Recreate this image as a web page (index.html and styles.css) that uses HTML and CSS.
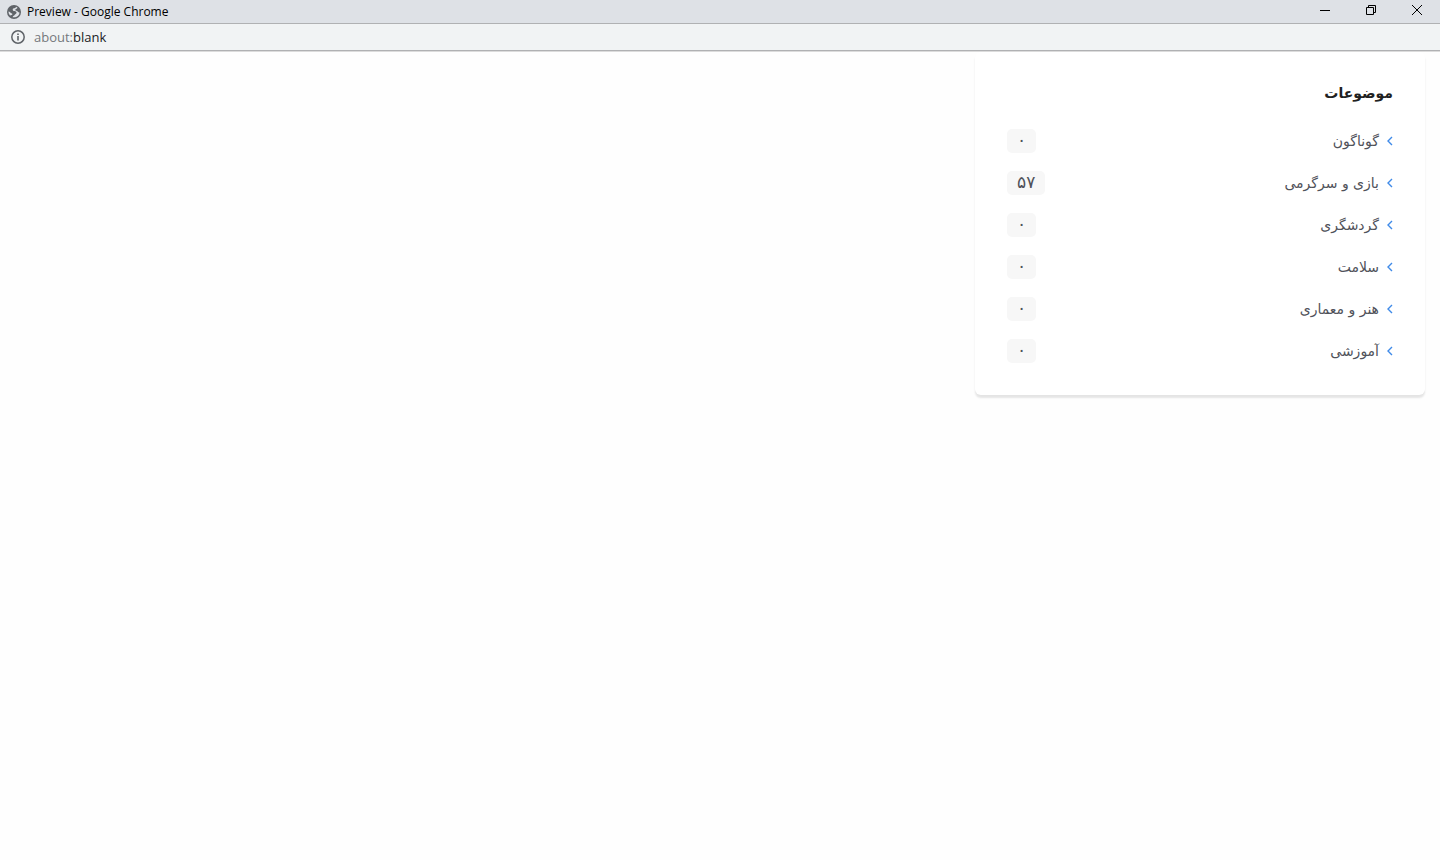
FILE: index.html
```html
<!DOCTYPE html>
<html lang="fa">
<head>
    <meta charset="UTF-8">
    <meta name="viewport" content="width=device-width, initial-scale=1.0">
    <title>Preview</title>
    <link rel="stylesheet" href="styles.css">
</head>
<body>
    <header class="titlebar" lang="en">
        <svg class="globe" viewBox="0 0 14 14" aria-hidden="true">
            <circle cx="7" cy="7" r="7" fill="#5f6368"/>
            <path d="M9 1.8C9 3.2 7.6 3.2 6.2 3.6C5.4 4.2 5.6 5.6 6.6 6C7.6 6.3 8.8 6.2 9.4 7C9.8 8.2 9 9 8 9.4C7.4 10.6 6 10.6 5.6 12.2C9.4 12.9 12.4 10.6 12.5 7.4C11.6 7.6 10.8 7 10.2 6C9 6 8 5.6 8.4 4.6C9 3.8 10.2 3.8 10.6 2.8ZM1.5 6.6C1.5 8.4 2 9.6 3 10.4C4 10.4 5.4 10 5.4 9C5 8 3.8 8.4 3.4 7.4C2.8 6.8 2.2 6.6 1.5 6.6Z" fill="#dee1e6"/>
        </svg>
        <span class="window-title">Preview - Google Chrome</span>
        <div class="window-buttons">
            <button type="button" aria-label="Minimize">
                <svg viewBox="0 0 12 12"><path d="M1 6.5h10"/></svg>
            </button>
            <button type="button" aria-label="Restore">
                <svg viewBox="0 0 12 12"><path d="M1.5 3.5h7v7h-7zM3.5 3.5v-2h7v7h-2"/></svg>
            </button>
            <button type="button" aria-label="Close">
                <svg viewBox="0 0 12 12"><path d="M1 1l10 10M11 1L1 11"/></svg>
            </button>
        </div>
    </header>
    <div class="addressbar" lang="en">
        <svg class="info" viewBox="0 0 14 14" aria-hidden="true">
            <circle cx="7" cy="7" r="6.2" fill="none" stroke="#5f6368" stroke-width="1.5"/>
            <path d="M6.2 6h1.6v4.5H6.2zM6.2 3.4h1.6V5H6.2z" fill="#5f6368"/>
        </svg>
        <span class="url">about:<b>blank</b></span>
    </div>

    <main dir="rtl">
        <section class="widget">
            <h3>موضوعات</h3>
            <ul class="categories">
                <li>
                    <a href="#"><svg viewBox="0 0 6 10"><path d="M5 1L1 5l4 4"/></svg>گوناگون</a>
                    <span class="count">۰</span>
                </li>
                <li>
                    <a href="#"><svg viewBox="0 0 6 10"><path d="M5 1L1 5l4 4"/></svg>بازی و سرگرمی</a>
                    <span class="count">۵۷</span>
                </li>
                <li>
                    <a href="#"><svg viewBox="0 0 6 10"><path d="M5 1L1 5l4 4"/></svg>گردشگری</a>
                    <span class="count">۰</span>
                </li>
                <li>
                    <a href="#"><svg viewBox="0 0 6 10"><path d="M5 1L1 5l4 4"/></svg>سلامت</a>
                    <span class="count">۰</span>
                </li>
                <li>
                    <a href="#"><svg viewBox="0 0 6 10"><path d="M5 1L1 5l4 4"/></svg>هنر و معماری</a>
                    <span class="count">۰</span>
                </li>
                <li>
                    <a href="#"><svg viewBox="0 0 6 10"><path d="M5 1L1 5l4 4"/></svg>آموزشی</a>
                    <span class="count">۰</span>
                </li>
            </ul>
        </section>
    </main>
</body>
</html>
```
FILE: styles.css
```css
* {
    box-sizing: border-box;
}

body {
    margin: 0;
    background-color: #fefefe;
    font-family: "DejaVu Sans", sans-serif;
}

/* window frame */
.titlebar {
    display: flex;
    align-items: center;
    height: 24px;
    padding-left: 7px;
    background-color: #dee1e6;
    border-bottom: 1px solid #b0b1b3;
}

.globe {
    width: 14px;
    height: 14px;
    margin-right: 6px;
}

.window-title {
    font-family: "Open Sans", sans-serif;
    font-size: 12px;
    line-height: 22px;
    color: #000000;
}

.window-buttons {
    display: flex;
    align-self: flex-start;
    margin-left: auto;
}

.window-buttons button {
    display: flex;
    align-items: center;
    justify-content: center;
    width: 46px;
    height: 20px;
    padding: 0;
    border: none;
    background: none;
}

.window-buttons svg {
    width: 12px;
    height: 12px;
    fill: none;
    stroke: #000000;
}

.addressbar {
    display: flex;
    align-items: center;
    height: 27px;
    padding-left: 11px;
    background-color: #f1f3f4;
    border-bottom: 1px solid #b0b1b3;
    box-shadow: 0 1px 0 #dcdcdc;
}

.info {
    width: 14px;
    height: 14px;
    margin-right: 9px;
}

.url {
    font-family: "Open Sans", sans-serif;
    font-size: 13px;
    line-height: 26px;
    color: #75787c;
}

.url b {
    font-weight: normal;
    color: #202124;
}

/* categories widget */
main {
    padding: 1px 15px 32px;
}

.widget {
    max-width: 450px;
    padding: 25px 32px 32px;
    background-color: #ffffff;
    border-radius: 6px;
    box-shadow: 0 3px 2px rgba(0, 0, 0, 0.1);
}

.widget h3 {
    margin: 0 0 20px;
    font-size: 14px;
    line-height: 32px;
    color: #212121;
}

.categories {
    display: flex;
    flex-direction: column;
    gap: 18px;
    margin: 0;
    padding: 0;
    list-style: none;
}

.categories li {
    display: flex;
    justify-content: space-between;
    height: 24px;
}

.categories a {
    display: flex;
    align-items: center;
    gap: 8px;
    font-size: 14px;
    line-height: 22px;
    color: #50525a;
    text-decoration: none;
}

.categories svg {
    width: 6px;
    height: 10px;
    fill: none;
    stroke: #3f8ae8;
    stroke-width: 1.4;
}

.count {
    padding: 0 10px;
    border-radius: 5px;
    background-color: #f7f7f7;
    font-size: 17px;
    line-height: 22px;
    color: #50525a;
}
```
